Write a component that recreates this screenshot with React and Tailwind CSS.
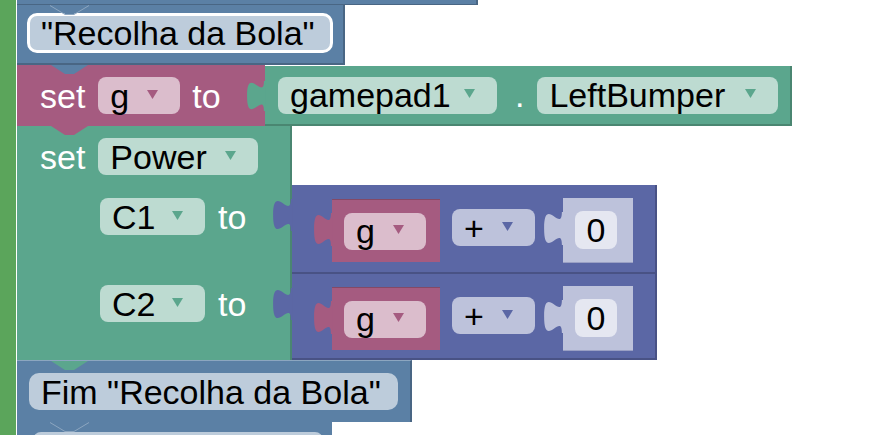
import React from 'react'

// Blockly workspace snippet: "Recolha da Bola" section with set blocks.

function Arrow({ fill }) {
  return (
    <svg width="11" height="9" viewBox="0 0 11 9" className="shrink-0">
      <polygon points="0,0 11,0 5.5,9" fill={fill} />
    </svg>
  )
}

function Pill({ className, arrow, children }) {
  return (
    <div className={`flex h-[37px] shrink-0 items-center rounded-[8px] pl-[12px] text-black ${className}`}>
      <span>{children}</span>
      {arrow && (
        <span className="ml-auto mr-[22px] -mt-[3px] flex">
          <Arrow fill={arrow} />
        </span>
      )}
    </div>
  )
}

// output tab on the left of a value block
function Tab({ fill, className }) {
  return (
    <svg
      viewBox="-0.5 -0.5 9 16"
      preserveAspectRatio="none"
      className={`absolute overflow-visible ${className}`}
    >
      <path d="M8.6,0 L8,0 C8,10 0,-8 0,7.5 C0,23 8,5 8,15 L8.6,15 Z" fill={fill} />
    </svg>
  )
}

// previous-block notch that dips into the block below
function Notch({ fill, line }) {
  return (
    <svg width="40" height="11" viewBox="0 0 40 11" className="absolute left-[33px] top-0">
      {fill && <path d="M1,0 L15,9 H24 L38,0 Z" fill={fill} />}
      {line && <path d="M0,0.5 L15,9.5 H24 L39,0.5" fill="none" stroke={line} strokeWidth="1" />}
    </svg>
  )
}

function MathRow({ tall }) {
  return (
    <div
      className={`relative flex w-[365px] items-start border-b-2 border-r-2 border-[#495285] bg-[#5b67a5] pl-[40px] ${
        tall ? 'h-[89px] pt-[13px]' : 'h-[86px] pt-[12px]'
      }`}
    >
      <Tab fill="#5b67a5" className="-left-[20px] top-[13px] h-[34px] w-[20px]" />
      <div className="relative mt-px flex h-[63px] w-[108px] items-center border-t border-[#844966] bg-[#a55b80] pl-[12px]">
        <Tab fill="#a55b80" className="-left-[19px] top-[12px] h-[35px] w-[19px]" />
        <Pill className="w-[82px] bg-[#dbbdcc]" arrow="#a55b80">g</Pill>
      </div>
      <div className="ml-[12px] mt-[11px]">
        <Pill className="w-[83px] bg-[#bdc2db]" arrow="#5b67a5">+</Pill>
      </div>
      <div className="relative ml-[28px] flex h-[65px] w-[70px] items-center border-b border-[#9aa0c4] bg-[#bdc2db] pl-[12px]">
        <Tab fill="#bdc2db" className="-left-[20px] top-[13px] h-[35px] w-[20px]" />
        <div className="flex h-[38px] w-[42px] items-center justify-center rounded-[8px] bg-[#e5e7f1] text-black">0</div>
      </div>
    </div>
  )
}

export default function App() {
  return (
    <div className="flex h-[435px] w-[880px] overflow-hidden bg-white font-['Liberation_Sans',Arial,sans-serif] text-[34px] leading-none">
      <div className="h-full w-[16px] shrink-0 bg-[#5ba55b]" />
      <div className="flex flex-col items-start pl-px">
        {/* block above */}
        <div className="h-[5px] w-[461px] border-b border-r-2 border-[#496684] bg-[#5b80a5]" />

        {/* "Recolha da Bola" */}
        <div className="relative h-[60px] w-[328px] border-b-2 border-r-2 border-[#496684] bg-[#5b80a5] pl-[10px] pt-[8px]">
          <Notch fill="#5b80a5" line="#8ca6c0" />
          <div className="flex h-[40px] w-[306px] items-center rounded-[10px] border-[3px] border-white bg-[#bdccdb] pl-[11px] text-black">
            "Recolha da Bola"
          </div>
        </div>

        {/* set g to gamepad1.LeftBumper */}
        <div className="flex items-start">
          <div className="relative flex h-[61px] w-[248px] items-center bg-[#a55b80] pl-[23px] text-white">
            <Notch fill="#5b80a5" />
            <span className="mr-[13px]">set</span>
            <Pill className="w-[82px] bg-[#dbbdcc]" arrow="#a55b80">g</Pill>
            <span className="ml-[12px]">to</span>
          </div>
          <div className="relative mt-px flex h-[60px] w-[527px] items-center border-b-2 border-r-2 border-[#4a8671] bg-[#5ba68d] pl-[13px] text-white">
            <Tab fill="#5ba68d" className="-left-[19px] top-[14px] h-[32px] w-[19px]" />
            <Pill className="w-[219px] bg-[#bddbd1]" arrow="#5ba68d">gamepad1</Pill>
            <span className="ml-[18px] mr-[13px]">.</span>
            <Pill className="w-[241px] bg-[#bddbd1]" arrow="#5ba68d">LeftBumper</Pill>
          </div>
        </div>

        {/* set Power C1 / C2 */}
        <div className="flex items-start">
          <div className="relative flex h-[234px] w-[275px] flex-col border-r-2 border-[#4a8671] bg-[#5ba68d] text-white">
            <Notch fill="#a55b80" />
            <div className="h-[59px] pl-[23px] pt-[12px]">
              <div className="flex items-center">
                <span className="mr-[13px]">set</span>
                <Pill className="w-[160px] bg-[#bddbd1]" arrow="#5ba68d">Power</Pill>
              </div>
            </div>
            <div className="h-[88px] pl-[83px] pt-[13px]">
              <div className="flex items-center">
                <Pill className="w-[105px] bg-[#bddbd1]" arrow="#5ba68d">C1</Pill>
                <span className="ml-[13px]">to</span>
              </div>
            </div>
            <div className="h-[87px] pl-[83px] pt-[12px]">
              <div className="flex items-center">
                <Pill className="w-[105px] bg-[#bddbd1]" arrow="#5ba68d">C2</Pill>
                <span className="ml-[13px]">to</span>
              </div>
            </div>
          </div>
          <div className="mt-[59px] flex flex-col">
            <MathRow tall />
            <MathRow />
          </div>
        </div>

        {/* Fim "Recolha da Bola" */}
        <div className="relative h-[62px] w-[395px] border-r-2 border-t border-[#8ca6c0] border-r-[#496684] bg-[#5b80a5] pl-[12px] pt-[12px]">
          <Notch fill="#5ba68d" />
          <div className="flex h-[37px] w-[369px] items-center rounded-[10px] bg-[#bdccdb] pl-[12px] text-black">
            Fim "Recolha da Bola"
          </div>
        </div>

        {/* next block */}
        <div className="relative h-[13px] w-[315px] bg-[#5b80a5] pl-[16px] pt-[10px]">
          <Notch fill="#5b80a5" line="#8ca6c0" />
          <div className="h-[37px] w-[290px] rounded-[8px] bg-[#bdccdb]" />
        </div>
      </div>
    </div>
  )
}
